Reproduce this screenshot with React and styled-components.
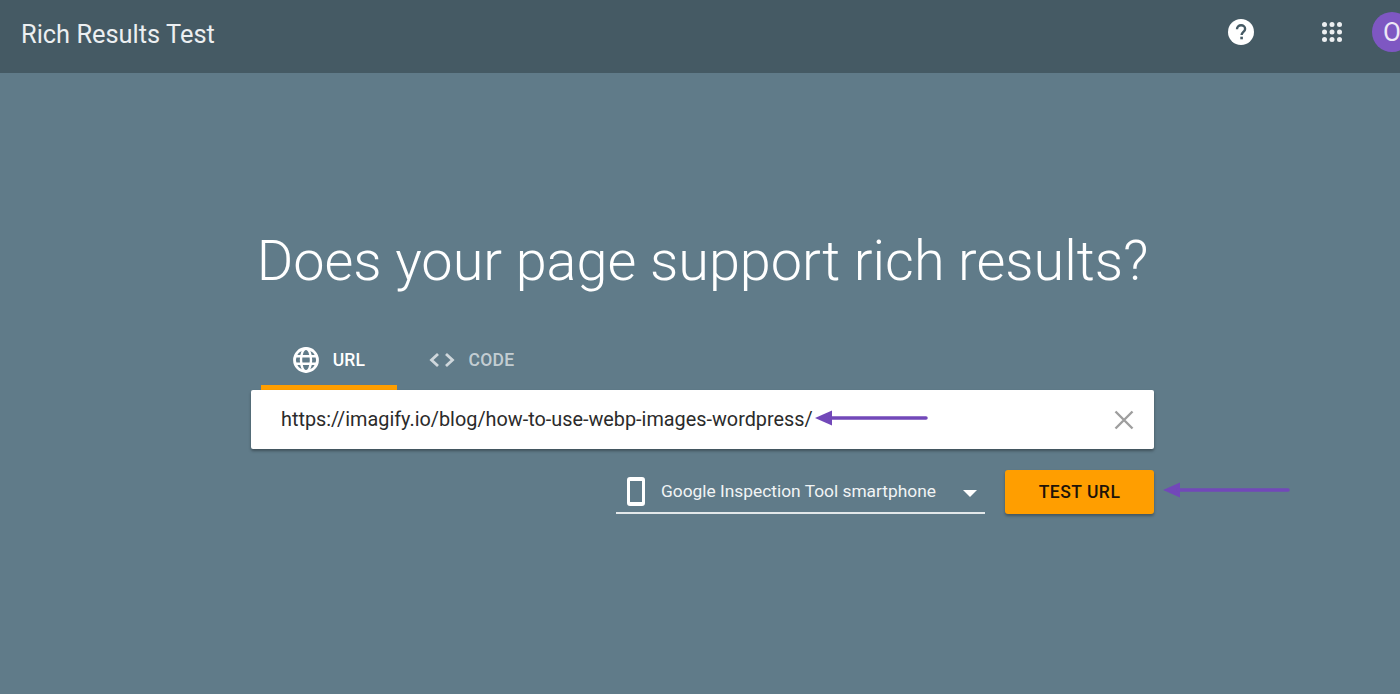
import React from "react";
import styled, { createGlobalStyle } from "styled-components";

const GlobalStyle = createGlobalStyle`
  html, body {
    margin: 0;
    height: 100%;
    overflow: hidden;
    background: #607b89;
    font-family: Roboto, "Liberation Sans", sans-serif;
  }
`;

const Page = styled.div`
  width: 1400px;
  height: 694px;
  overflow: hidden;
  background: #607b89;
`;

const Header = styled.header`
  height: 73px;
  background: #455a64;
  display: flex;
  align-items: center;
  padding-left: 21px;
  color: #fff;
`;

const AppTitle = styled.div`
  flex: 1;
  font-size: 25.4px;
  line-height: 28px;
  color: #eceff1;
  margin-top: -5px;
`;

const HeaderActions = styled.div`
  display: flex;
  align-items: center;
  width: 172px;
  height: 40px;
  margin-top: -9px;
  flex-shrink: 0;
`;

const HelpSlot = styled.div`
  flex: 0 0 94px;
  display: flex;
`;

const GridSlot = styled.div`
  flex: 0 0 50px;
  display: flex;
`;

const Avatar = styled.div`
  flex: 0 0 40px;
  height: 40px;
  border-radius: 50%;
  background: #7e57c2;
  color: #ede7f6;
  font-size: 26px;
  line-height: 40px;
  text-align: center;
`;

const Main = styled.main`
  width: 903px;
  margin-left: 251px;
  display: flex;
  flex-direction: column;
`;

const Heading = styled.h1`
  margin: 152px -40px 0;
  font-size: 55.8px;
  line-height: 72px;
  font-weight: 300;
  color: #fff;
  text-align: center;
  white-space: nowrap;
`;

const Tabs = styled.div`
  display: flex;
  margin: 40px 0 0 10px;
  height: 53px;
`;

const Tab = styled.div`
  box-sizing: border-box;
  width: ${(p) => p.$width}px;
  height: 53px;
  padding-bottom: 2px;
  display: flex;
  align-items: center;
  justify-content: center;
  gap: 14px;
  font-size: 17.5px;
  font-weight: 500;
  letter-spacing: 0.25px;
  color: ${(p) => (p.$active ? "#fff" : "rgba(255,255,255,0.65)")};
  border-bottom: 5px solid ${(p) => (p.$active ? "#ff9e00" : "transparent")};
`;

const InputCard = styled.div`
  height: 59px;
  background: #fff;
  border-radius: 2px;
  box-shadow: 0 2px 3px rgba(0, 0, 0, 0.35);
  display: flex;
  align-items: center;
  justify-content: space-between;
  padding: 0 19px 0 30px;
  position: relative;
`;

const UrlText = styled.div`
  font-size: 19.84px;
  color: #2b2b2b;
  white-space: nowrap;
`;

const Controls = styled.div`
  display: flex;
  justify-content: flex-end;
  align-items: flex-start;
  gap: 20px;
  margin-top: 21px;
  position: relative;
`;

const DeviceSelect = styled.div`
  width: 369px;
  height: 44px;
  box-sizing: border-box;
  border-bottom: 2px solid #e3e8ea;
  display: flex;
  align-items: center;
  padding-left: 11px;
  color: #f1f4f5;
  font-size: 17.35px;
`;

const DeviceLabel = styled.span`
  flex: 1;
  margin-left: 16px;
  white-space: nowrap;
`;

const Caret = styled.span`
  width: 0;
  height: 0;
  border-left: 7px solid transparent;
  border-right: 7px solid transparent;
  border-top: 7px solid #fff;
  margin: 4px 8px 0 0;
`;

const TestButton = styled.button`
  width: 149px;
  height: 44px;
  border: 0;
  border-radius: 3px;
  background: #ff9e00;
  color: #1f1408;
  font-family: inherit;
  font-size: 17.5px;
  font-weight: 500;
  letter-spacing: 0.5px;
  box-shadow: 0 2px 3px rgba(0, 0, 0, 0.3);
`;

const Arrow = styled.svg`
  position: absolute;
  left: ${(p) => p.$left}px;
  top: ${(p) => p.$top}px;
`;

const PurpleArrow = ({ left, top, width }) => (
  <Arrow $left={left} $top={top} width={width} height="16" viewBox={`0 0 ${width} 16`}>
    <path d="M0 8 L17 0.500 V15.500 Z" fill="#7248b9" />
    <path d={`M15 8 H${width - 2}`} stroke="#7248b9" strokeWidth="3.500" strokeLinecap="round" />
  </Arrow>
);

const App = () => (
  <Page>
    <GlobalStyle />
    <Header>
      <AppTitle>Rich Results Test</AppTitle>
      <HeaderActions>
        <HelpSlot>
          <svg width="26" height="26" viewBox="0 0 26 26">
            <circle cx="13" cy="13" r="13" fill="#fff" />
            <path
              d="M9 10.2c0-2.3 1.800-3.900 4.100-3.900s4 1.500 4 3.600c0 2.900-3.500 3-3.500 6"
              fill="none"
              stroke="#455a64"
              strokeWidth="2.400"
            />
            <rect x="12.300" y="17.700" width="2.600" height="2.600" fill="#455a64" />
          </svg>
        </HelpSlot>
        <GridSlot>
          <svg width="20" height="20" viewBox="0 0 20 20" fill="#eceff1">
            {[2.500, 10, 17.500].flatMap((cy) =>
              [2.500, 10, 17.500].map((cx) => <circle key={`${cx}-${cy}`} cx={cx} cy={cy} r="2.500" />)
            )}
          </svg>
        </GridSlot>
        <Avatar>O</Avatar>
      </HeaderActions>
    </Header>
    <Main>
      <Heading>Does your page support rich results?</Heading>
      <Tabs>
        <Tab $active $width={136}>
          <svg width="26" height="26" viewBox="0 0 26 26" fill="none" stroke="#fff" strokeWidth="2.400">
            <circle cx="13" cy="13" r="11.500" strokeWidth="2.800" />
            <ellipse cx="13" cy="13" rx="5" ry="11.500" />
            <path d="M2.500 9.200h21M2.500 16.800h21" />
          </svg>
          URL
        </Tab>
        <Tab $width={149}>
          <svg width="26" height="18" viewBox="0 0 26 18" fill="none" stroke="rgba(255,255,255,0.7)" strokeWidth="2.800">
            <path d="M9 3 L2.500 9 L9 15M17 3 L23.500 9 L17 15" />
          </svg>
          CODE
        </Tab>
      </Tabs>
      <InputCard>
        <UrlText>https://imagify.io/blog/how-to-use-webp-images-wordpress/</UrlText>
        <svg width="22" height="22" viewBox="0 0 22 22" stroke="#9e9e9e" strokeWidth="2.400">
          <path d="M2.500 2.500 L19.500 19.500M19.500 2.500 L2.500 19.500" />
        </svg>
        <PurpleArrow left={564} top={20} width={113} />
      </InputCard>
      <Controls>
        <DeviceSelect>
          <svg width="18" height="29" viewBox="0 0 18 29">
            <path
              fillRule="evenodd"
              fill="#fff"
              d="M3 0h12a3 3 0 0 1 3 3v23a3 3 0 0 1-3 3H3a3 3 0 0 1-3-3V3a3 3 0 0 1 3-3zM3 4v21h12V4z"
            />
          </svg>
          <DeviceLabel>Google Inspection Tool smartphone</DeviceLabel>
          <Caret />
        </DeviceSelect>
        <TestButton>TEST URL</TestButton>
        <PurpleArrow left={912} top={12} width={127} />
      </Controls>
    </Main>
  </Page>
);

export default App;
